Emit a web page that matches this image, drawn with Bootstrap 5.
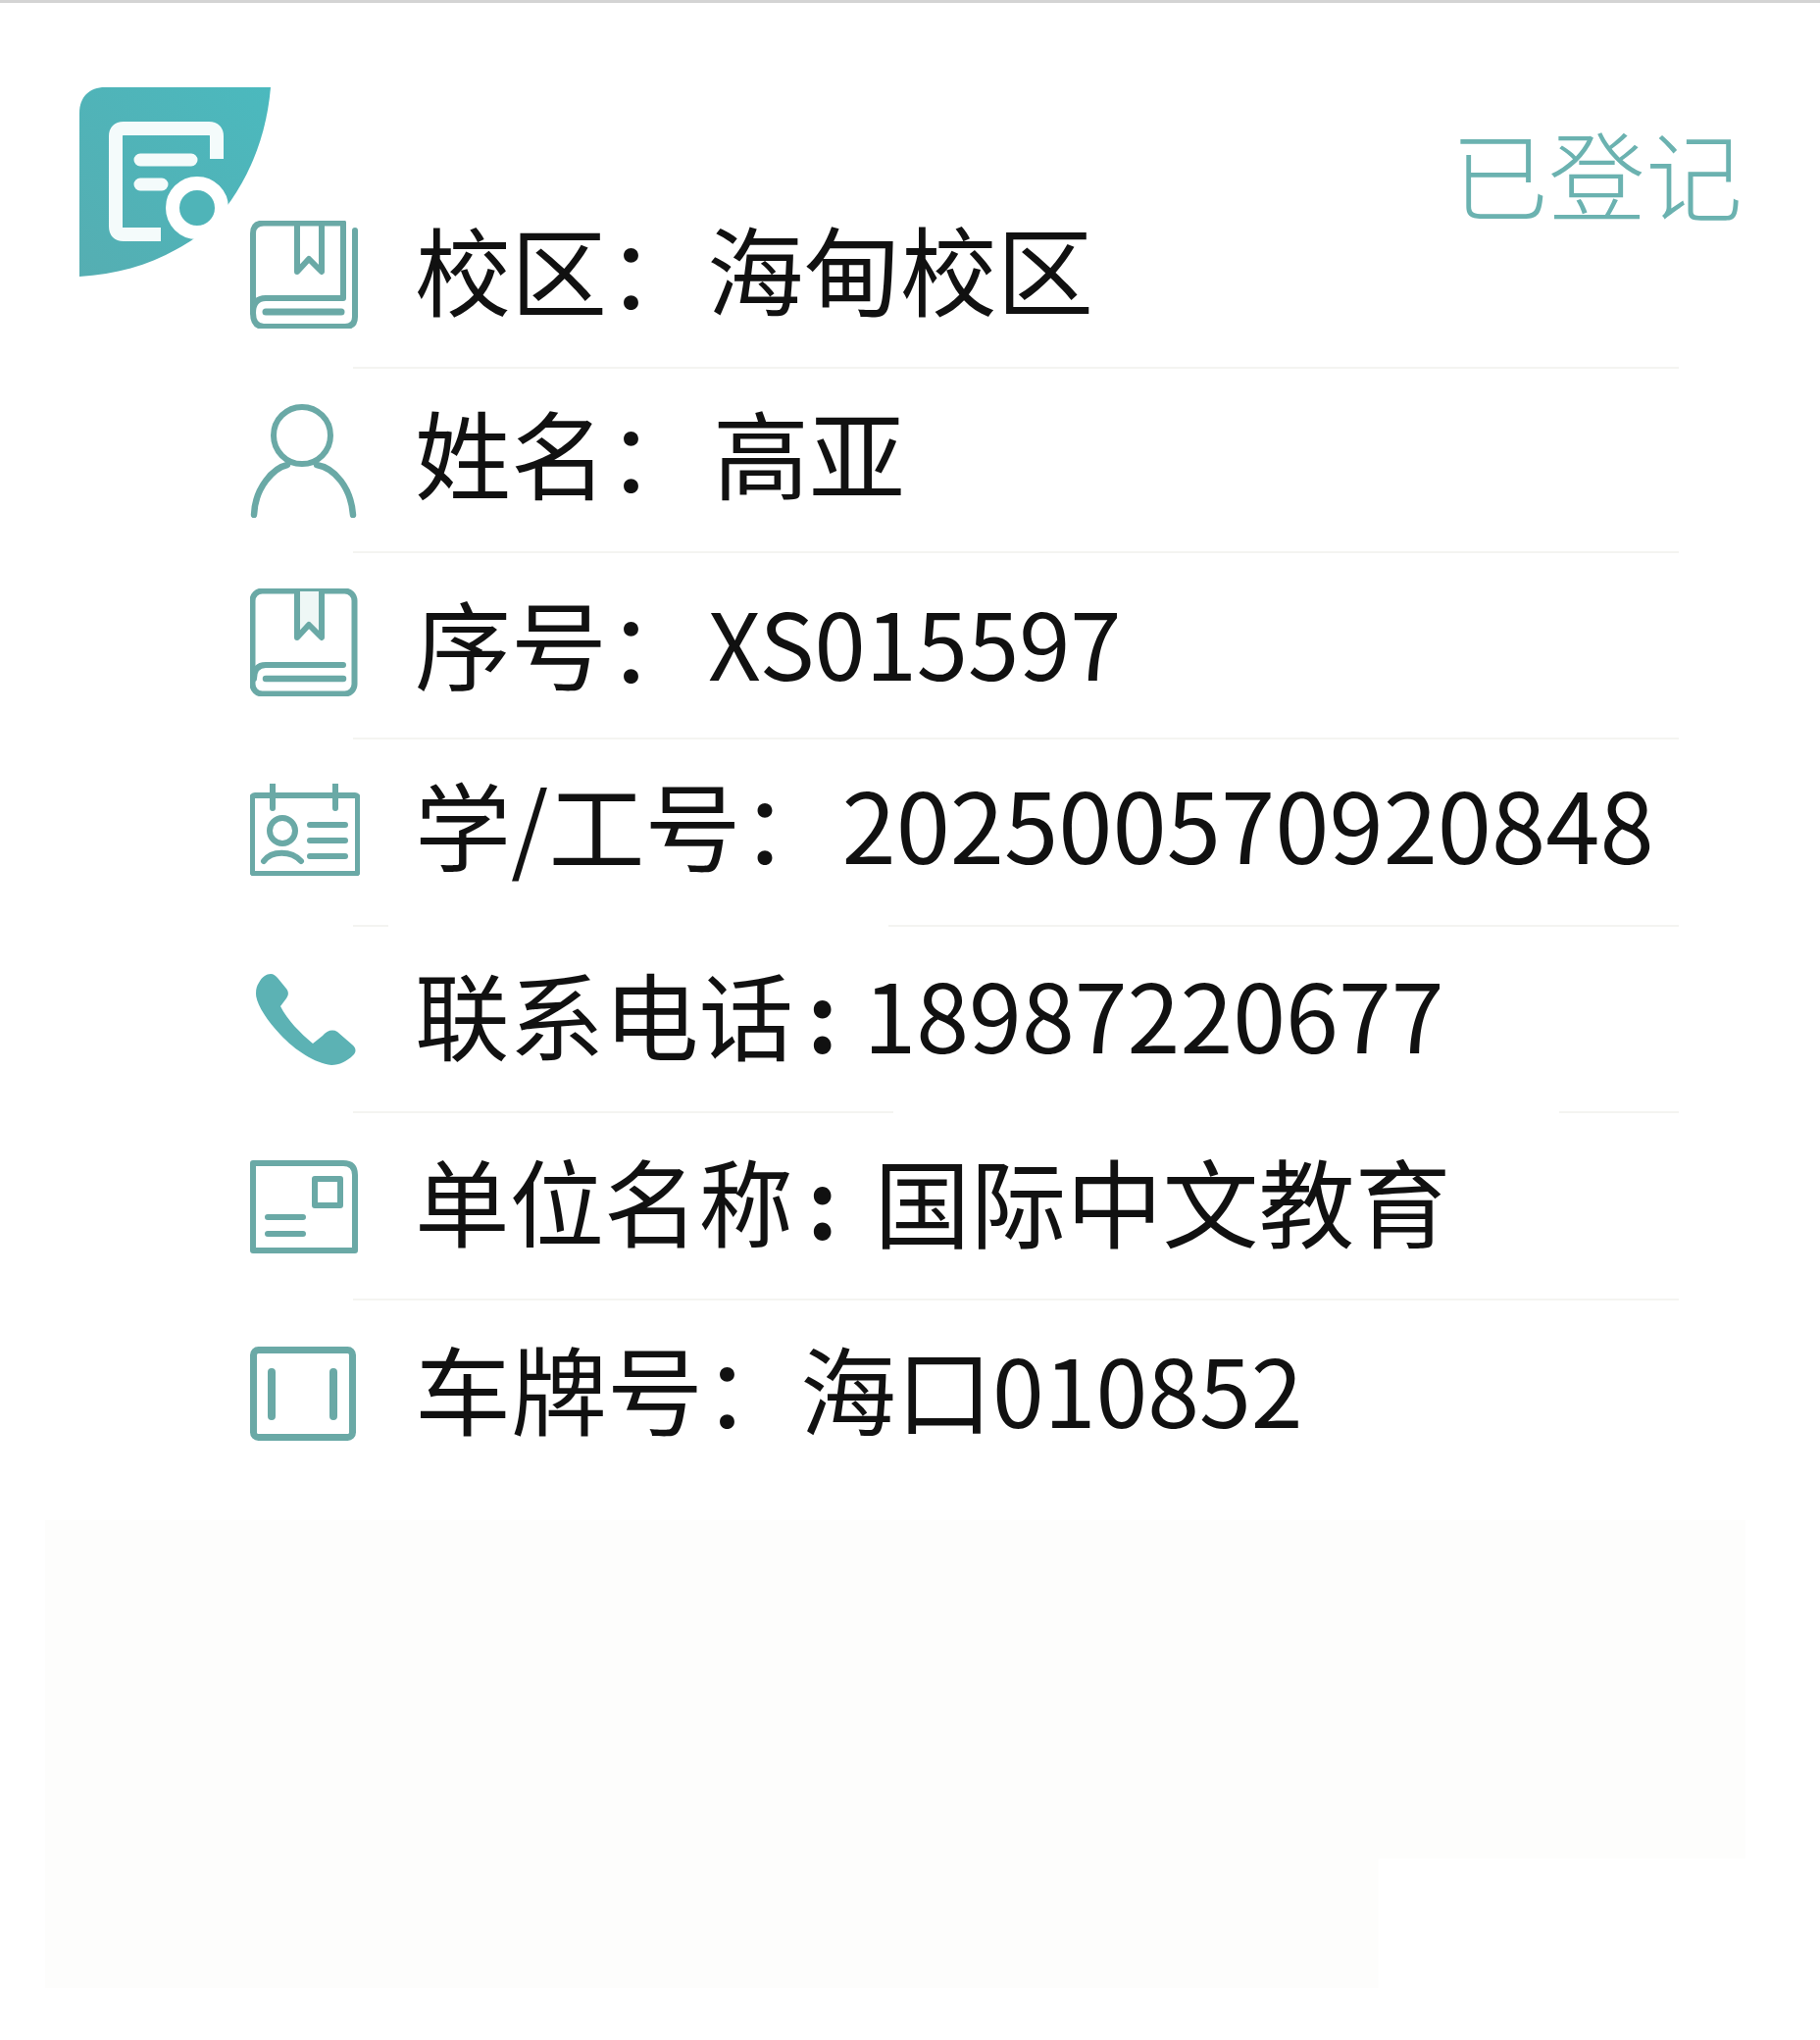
<!DOCTYPE html>
<html lang="zh-CN">
<head>
  <meta charset="UTF-8">
  <title>登记信息</title>
  <link href="https://cdn.jsdelivr.net/npm/bootstrap@5.3.3/dist/css/bootstrap.min.css" rel="stylesheet">
  <style>
    body {
      background: #fff;
      border-top: 3px solid #d4d4d4;
      font-family: "Noto Sans CJK SC", "Noto Sans", sans-serif;
      color: #111;
    }
    .sheet { position: relative; height: 2077px; overflow: hidden; }

    /* corner ribbon + state */
    .corner-logo { position: absolute; left: 81px; top: 84px; width: 196px; height: 196px; }
    .state-tag {
      position: absolute; left: 1480px; top: 123px;
      font-size: 99px; line-height: 1; font-weight: 300; color: #6bb2b0;
    }

    /* rows */
    .info-list { padding: 182px 144px 0 255px; margin: 0; }
    .info-row {
      height: 190.5px;
      background: linear-gradient(#f4f4f1, #f4f4f1) no-repeat 105px 100% / 1352px 2px;
      font-size: 98px; line-height: 1; white-space: nowrap;
    }
    .info-row:last-child { background: none; }
    .row-short { height: 188px; }
    .row-short .field-name, .row-short .field-val { margin-bottom: 22px; }
    .row-lift { padding-bottom: 6px; }
    .row-drop .field-name, .row-drop .field-val { margin-bottom: 11px; }
    .row-compact { font-size: 96.5px; }
    .divider-gap-a {
      background:
        linear-gradient(#f4f4f1, #f4f4f1) no-repeat 105px 100% / 36px 2px,
        linear-gradient(#f4f4f1, #f4f4f1) no-repeat 651px 100% / 806px 2px;
    }
    .divider-gap-b {
      background:
        linear-gradient(#f4f4f1, #f4f4f1) no-repeat 105px 100% / 551px 2px,
        linear-gradient(#f4f4f1, #f4f4f1) no-repeat 1335px 100% / 122px 2px;
    }
    .icon-cell { width: 168px; flex: none; }
    .icon-cell svg { display: block; fill: none; stroke: #6aa9a6; stroke-width: 6; stroke-linecap: round; stroke-linejoin: round; }
    .icon-up { margin-bottom: 8px; }
    .icon-nudge { margin-left: 6px; }
    .field-name, .field-val { margin-bottom: 16px; }
    .colon-strong { font-weight: 700; margin-left: 14px; }

    /* value offsets: the source text isn't on a common tab stop */
    .val-campus { margin-left: 4px; font-size: 98.5px; }
    .val-name { margin-left: 10px; }
    .val-serial { margin-left: 5px; font-size: 94px; }
    .val-staff { margin-left: 5px; font-size: 99.5px; }
    .val-phone { margin-left: 26px; font-size: 97px; }
    .val-org { margin-left: 37px; font-size: 98px; }
    .val-plate { margin-left: 1px; }
    .plate-digits { font-size: 95px; }

    /* faint off-white panel under the list */
    .under-panel {
      height: 477px; margin: 34px 76px 0 46px;
      background: #fdfdfc;
      clip-path: polygon(0 0, 100% 0, 100% 345px, 78.4% 345px, 78.4% 100%, 0 100%);
    }
  </style>
</head>
<body>
<div class="sheet">
  <svg class="corner-logo" viewBox="0 0 196 196">
    <defs>
      <linearGradient id="ribbon" x1="0" y1="1" x2="1" y2="0">
        <stop offset="0" stop-color="#55aeb2"/>
        <stop offset="1" stop-color="#4bb9be"/>
      </linearGradient>
    </defs>
    <path d="M26 2H195C190 62 165 112 130 147C90 177 50 192 0 195V28C0 12 10 2 26 2Z" fill="url(#ribbon)"/>
    <path d="M140 75V52Q140 44 132 44H45Q37 44 37 52V144Q37 152 45 152H83" fill="none" stroke="#f4fbfb" stroke-width="14" stroke-linecap="butt"/>
    <path d="M62 76H114M62 101H84" fill="none" stroke="#f4fbfb" stroke-width="13" stroke-linecap="round"/>
    <circle cx="120" cy="125" r="25" fill="#4fb4b8" stroke="#fff" stroke-width="14"/>
  </svg>
  <div class="state-tag">已登记</div>

  <ul class="info-list list-unstyled">
    <li class="info-row d-flex align-items-center">
      <div class="icon-cell">
        <svg width="110" height="110" viewBox="0 0 110 110">
          <path d="M95 2.500H14Q3 2.500 3 13V94"/>
          <path d="M107 10V98Q107 108 97 108H14Q3 108 3 94Q3 79 16 79H95V2.500"/>
          <path d="M16 93H93" stroke-width="7"/>
          <path d="M48 3V52L60 39L73 52V3"/>
        </svg>
      </div>
      <span class="field-name">校区：</span><span class="field-val val-campus">海甸校区</span>
    </li>
    <li class="info-row row-short d-flex align-items-center">
      <div class="icon-cell">
        <svg width="110" height="116" viewBox="0 0 110 116">
          <circle cx="53" cy="32" r="29"/>
          <path d="M4 113C5 85 24 65 38 62M68 62C86 65 103 85 105 113" stroke-width="6.500"/>
        </svg>
      </div>
      <span class="field-name">姓名：</span><span class="field-val val-name">高亚</span>
    </li>
    <li class="info-row row-drop d-flex align-items-center">
      <div class="icon-cell">
        <svg class="icon-up" width="110" height="110" viewBox="0 0 110 110">
          <rect x="2.500" y="2.500" width="104" height="105" rx="10"/>
          <path d="M4 92Q4 78 16 78H95"/>
          <path d="M16 92H95" stroke-width="6.500"/>
          <path d="M48 3V50L60 37L73 50V3" fill="#eef7f6"/>
        </svg>
      </div>
      <span class="field-name">序号：</span><span class="field-val val-serial">XS015597</span>
    </li>
    <li class="info-row row-lift divider-gap-a d-flex align-items-center">
      <div class="icon-cell">
        <svg width="112" height="94" viewBox="0 0 112 94">
          <rect x="2" y="12" width="108" height="80" rx="3"/>
          <path d="M23 1V25M87 1V25"/>
          <circle cx="33" cy="48" r="13"/>
          <path d="M14 79C22 68 42 68 52 79"/>
          <path d="M61 42H97M61 58H97M61 74H97"/>
        </svg>
      </div>
      <span class="field-name">学/工号：</span><span class="field-val val-staff">202500570920848</span>
    </li>
    <li class="info-row row-compact divider-gap-b d-flex align-items-center">
      <div class="icon-cell">
        <svg class="icon-nudge" width="102" height="94" viewBox="0 0 102 94">
          <path style="fill:#5cb2b4;stroke:none" d="M3 9C6 3 11 0 15 0C18 0 20 2 22 4L31 15C34 19 33 22 31 25L25 33C32 47 45 60 58 71L68 63C72 58 78 56 83 59L98 72C103 76 102 80 99 83C93 89 85 93 77 93C60 91 40 78 25 62C10 46 0 30 0 20C0 15 1 12 3 9Z"/>
        </svg>
      </div>
      <span class="field-name">联系电话<span class="colon-strong">:</span></span><span class="field-val val-phone">18987220677</span>
    </li>
    <li class="info-row row-compact d-flex align-items-center">
      <div class="icon-cell">
        <svg width="110" height="95" viewBox="0 0 110 95">
          <path d="M3 3H95Q107 3 107 15V92H3Z"/>
          <rect x="66" y="19" width="26" height="27"/>
          <path d="M18 58H54M18 75H54"/>
        </svg>
      </div>
      <span class="field-name">单位名称<span class="colon-strong">:</span></span><span class="field-val val-org">国际中文教育</span>
    </li>
    <li class="info-row d-flex align-items-center">
      <div class="icon-cell">
        <svg width="108" height="96" viewBox="0 0 108 96">
          <rect x="3.500" y="3.500" width="101" height="89" rx="5" stroke-width="7"/>
          <path d="M22 26V71M85 26V71" stroke-width="8"/>
        </svg>
      </div>
      <span class="field-name">车牌号：</span><span class="field-val val-plate">海口<span class="plate-digits">010852</span></span>
    </li>
  </ul>

  <div class="under-panel"></div>
</div>
<script src="https://cdn.jsdelivr.net/npm/bootstrap@5.3.3/dist/js/bootstrap.bundle.min.js"></script>
</body>
</html>
